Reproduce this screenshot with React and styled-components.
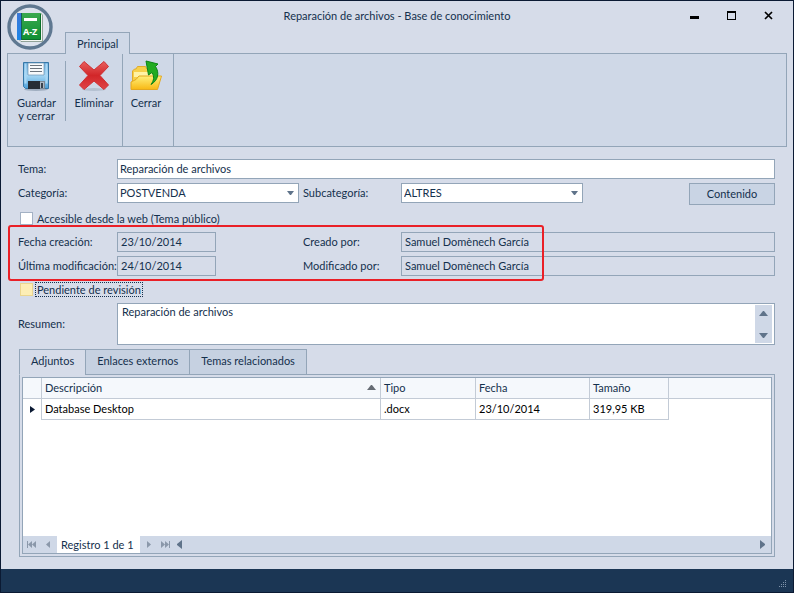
import { useState } from 'react';
import styled, { createGlobalStyle } from 'styled-components';

const GlobalStyle = createGlobalStyle`
    * {
        box-sizing: border-box;
    }
    body {
        margin: 0;
    }
    body, button, input, select, textarea {
        font-family: Lato, Roboto, sans-serif;
        font-size: 11px;
        line-height: 13px;
        color: #14304d;
    }
`;

const Window = styled.div`
    position: relative;
    display: flex;
    flex-direction: column;
    min-height: 100vh;
    border: 1px solid #0b1a33;
    background-color: #d6dce9;
`;

/* ---------- title bar ---------- */

const TitleBar = styled.header`
    display: grid;
    grid-template-columns: 1fr auto 1fr;
    align-items: center;
    height: 31px;
    padding: 0 13px 2px;
`;

const Title = styled.h1`
    grid-column: 2;
    margin: 0;
    font-size: 11px;
    font-weight: normal;
`;

const WindowButtons = styled.div`
    display: flex;
    justify-content: flex-end;
    gap: 13px;
`;

const WindowButton = styled.button`
    display: flex;
    align-items: center;
    justify-content: center;
    width: 24px;
    height: 24px;
    padding: 0;
    border: none;
    background: none;
`;

const AppLogo = styled.div`
    // sits over the title bar and the ribbon
    position: absolute;
    top: 3px;
    left: 6px;
    width: 46px;
    height: 46px;
    z-index: 1;

    svg {
        display: block;
    }
`;

/* ---------- ribbon ---------- */

const RibbonTabs = styled.div`
    display: flex;
    padding-left: 64px;
`;

const RibbonTab = styled.button`
    height: 22px;
    margin-bottom: -1px;
    padding: 0 11px;
    border: 1px solid #93a5b8;
    border-bottom: none;
    background-color: #cfd8e7;
    z-index: 1;
`;

const Ribbon = styled.div`
    display: flex;
    height: 94px;
    margin: 0 6px;
    border: 1px solid #93a5b8;
    background-color: #cfd8e7;
`;

const RibbonGroup = styled.div`
    display: flex;
    padding: 6px 0 0;
    border-right: 1px solid #93a5b8;

    &:last-child {
        padding-right: 4px;
    }
`;

const RibbonButton = styled.button`
    display: flex;
    flex-direction: column;
    align-items: center;
    gap: 4px;
    width: ${(props) => props.$width}px;
    height: 66px;
    padding: 0;
    border: none;
    background: none;
`;

const Separator = styled.div`
    width: 1px;
    height: 60px;
    margin-top: 1px;
    background-color: #93a5b8;
`;

/* ---------- form ---------- */

const Form = styled.form`
    display: flex;
    flex-direction: column;
    gap: 4px;
    padding: 12px 18px 0 17px;
`;

const Row = styled.div`
    display: grid;
    grid-template-columns: ${(props) => props.$columns || '99px 182px 102px 182px 1fr'};
    align-items: start;
`;

const Label = styled.label`
    padding-left: ${(props) => (props.$inner ? '4px' : '0')};
    line-height: 20px;
    white-space: nowrap;
`;

const Field = styled.input`
    width: ${(props) => props.$width || '100%'};
    height: 20px;
    padding: 0 2px 2px;
    border: 1px solid #93a5b8;
    border-radius: 0;
    background-color: #fff;
    outline: none;

    &:read-only {
        padding: 0 3px 2px;
        background-color: transparent;
    }
`;

const SelectBox = styled.div`
    position: relative;

    select {
        appearance: none;
        width: 100%;
        height: 20px;
        padding: 0 20px 2px 2px;
        border: 1px solid #93a5b8;
        border-radius: 0;
        background-color: #fff;
    }

    svg {
        position: absolute;
        top: 8px;
        right: 5px;
        pointer-events: none;
    }
`;

const ContentButton = styled.button`
    justify-self: end;
    width: 86px;
    height: 22px;
    padding: 0 0 2px;
    border: 1px solid #93a5b8;
    background-color: #c9d4e4;
`;

const CheckLabel = styled.label`
    display: flex;
    align-items: center;
    gap: 3px;
    height: 19px;
    padding-left: 2px;

    span {
        padding: 0 1px;
        outline: ${(props) => (props.$focused ? '1px dotted #14304d' : 'none')};
    }
`;

const CheckBox = styled.input`
    appearance: none;
    width: 13px;
    height: 13px;
    margin: 0;
    border: 1px solid ${(props) => (props.$focused ? '#ebd68f' : '#a3b1c4')};
    background-color: ${(props) => (props.$focused ? '#fdeeb5' : '#fff')};

    &:checked {
        box-shadow: inset 0 0 0 2px #fff;
        background-color: #14304d;
    }
`;

const AuditRows = styled.div`
    position: relative;
    display: flex;
    flex-direction: column;
    gap: 4px;
`;

const Highlight = styled.div`
    // red frame drawn over the audit fields
    position: absolute;
    top: -7px;
    bottom: -5px;
    left: -10px;
    width: 536px;
    border: 2px solid #ea2027;
    border-radius: 3px;
    pointer-events: none;
`;

const MemoLabel = styled(Label)`
    align-self: center;
`;

const Memo = styled.div`
    display: flex;
    height: 42px;
    padding: 1px 2px 1px 0;
    border: 1px solid #93a5b8;
    background-color: #fff;

    textarea {
        flex: 1;
        padding: 0 4px;
        border: none;
        background: none;
        resize: none;
        outline: none;
        overflow: hidden;
    }
`;

const Scroller = styled.div`
    display: flex;
    flex-direction: column;
    justify-content: space-between;
    width: 17px;
    background-color: #cfd8e7;
`;

const ScrollButton = styled.button`
    display: flex;
    align-items: center;
    justify-content: center;
    width: 17px;
    height: 16px;
    padding: 0;
    border: none;
    background: none;
`;

/* ---------- tabs and table ---------- */

const Details = styled.section`
    display: flex;
    flex: 1;
    flex-direction: column;
    padding: 4px 18px 12px;
`;

const Tabs = styled.div`
    display: flex;
    z-index: 1;
`;

const Tab = styled.button`
    height: 26px;
    margin-right: -1px;
    margin-bottom: -1px;
    padding: 0 11px 3px;
    border: 1px solid #93a5b8;
    border-bottom-color: ${(props) => (props.$active ? '#d6dce9' : '#93a5b8')};
    background-color: ${(props) => (props.$active ? '#d6dce9' : '#c6d1e1')};
`;

const TabPanel = styled.div`
    display: flex;
    flex: 1;
    padding: 2px;
    border: 1px solid #93a5b8;
`;

const Grid = styled.div`
    display: flex;
    flex: 1;
    flex-direction: column;
    justify-content: space-between;
    border: 1px solid #93a5b8;
    background-color: #fff;
`;

const Table = styled.table`
    width: 100%;
    table-layout: fixed;
    border-collapse: separate;
    border-spacing: 0;
    color: #14304d;

    th, td {
        height: 21px;
        padding: 0 4px 2px 3px;
        border-right: 1px solid #c3cbd6;
        border-bottom: 1px solid #c3cbd6;
        font-weight: normal;
        text-align: left;
    }

    th {
        background-color: #f5f8fc;
    }

    td {
        color: #000;
    }

    th:last-child, td:last-child {
        border-right: none;
    }

    td:first-child, td:last-child {
        padding-bottom: 0;
        border-bottom: none;
    }
`;

const SortHeader = styled.div`
    display: flex;
    align-items: center;
    justify-content: space-between;
`;

const RowMark = styled.svg`
    display: block;
    margin-left: 4px;
`;

const Navigator = styled.div`
    display: flex;
    align-items: stretch;
    height: 17px;
    background-color: #cfd8e7;
`;

const NavButton = styled.button`
    display: flex;
    align-items: center;
    justify-content: center;
    width: ${(props) => props.$width || 17}px;
    padding: 0;
    border: none;
    background: none;
`;

const Record = styled.span`
    padding: 0 6px 0 4px;
    background-color: #fff;
    line-height: 17px;
`;

const Spacer = styled.div`
    flex: 1;
`;

const StatusBar = styled.footer`
    display: flex;
    align-items: flex-end;
    justify-content: flex-end;
    height: 23px;
    padding: 4px 6px;
    background-color: #1b3654;
`;

/* ---------- icons ---------- */

function Arrow({ dir, color = '#5f738a' }) {
    const points = {
        up: '0,5 4,0 5,0 9,5',
        down: '0,0 9,0 5,5 4,5',
        left: '5,0 5,9 0,5 0,4',
        right: '0,0 0,9 5,5 5,4',
    };
    const wide = dir === 'up' || dir === 'down';
    return (
        <svg width={wide ? 9 : 5} height={wide ? 5 : 9}>
            <polygon points={points[dir]} fill={color} />
        </svg>
    );
}

function DropArrow() {
    return (
        <svg width="7" height="4">
            <polygon points="0,0 7,0 4,4 3,4" fill="#5f738a" />
        </svg>
    );
}

function NavIcon({ kind }) {
    const flip = kind === 'next' || kind === 'last';
    const many = kind === 'first' || kind === 'last';
    return (
        <svg width="9" height="7" viewBox="0 0 9 7" fill="#8b98aa">
            <g transform={flip ? 'translate(9 0) scale(-1 1)' : undefined}>
                {many ? (
                    <path d="M0 0h1v7H0zM5 0v7L1 3.5zM9 0v7L5 3.5z" />
                ) : (
                    <path d="M6 0v7L2 3.5z" />
                )}
            </g>
        </svg>
    );
}

function BookLogo() {
    return (
        <svg width="46" height="46" viewBox="0 0 46 46">
            <defs>
                <linearGradient id="cover" x1="0" y1="0" x2="0" y2="1">
                    <stop offset="0" stopColor="#3aa94f" />
                    <stop offset="1" stopColor="#0e8f33" />
                </linearGradient>
                <linearGradient id="spine" x1="0" y1="0" x2="0" y2="1">
                    <stop offset="0" stopColor="#3c78d8" />
                    <stop offset="1" stopColor="#1c86e8" />
                </linearGradient>
            </defs>
            <circle cx="23" cy="23" r="21" fill="#dce2ed" stroke="#5f7891" strokeWidth="3.4" />
            <path d="M12 35.500l2 2h21.500V11l-2-2z" fill="#f4f6f2" stroke="#55705c" strokeWidth=".6" />
            <rect x="10" y="9" width="24" height="27" rx="1" fill="url(#cover)" />
            <path d="M33.500 10v25.500H14" fill="none" stroke="#08702a" />
            <path d="M11 9h3v27h-3a1 1 0 0 1-1-1V10a1 1 0 0 1 1-1z" fill="url(#spine)" />
            <rect x="14" y="9" width="1" height="27" fill="#145f57" />
            <rect x="17" y="14" width="13" height="3" fill="#fff" />
            <text x="16" y="31" fontSize="9" fontWeight="bold" fontFamily="Noto Sans, sans-serif" fill="#fff">A-Z</text>
        </svg>
    );
}

function SaveIcon() {
    return (
        <svg width="32" height="32" viewBox="0 0 32 32">
            <defs>
                <linearGradient id="disk" x1="0" y1="0" x2="0" y2="1">
                    <stop offset="0" stopColor="#5c9fd2" />
                    <stop offset=".5" stopColor="#a4d6f4" />
                    <stop offset="1" stopColor="#4d9fd8" />
                </linearGradient>
            </defs>
            <ellipse cx="15" cy="29.500" rx="12" ry="1.500" fill="#9fadbf" />
            <path d="M2.500 2.500h25v26H4.500l-2-2z" fill="url(#disk)" stroke="#3778a8" />
            <path d="M3.500 3.500h2v20h-2zM24.500 3.500h2v20h-2z" fill="#a9d8f5" />
            <path d="M7 3h16v12H7z" fill="#f8fafc" stroke="#6d94b3" strokeWidth=".7" />
            <path d="M9 5.500h12M9 8.500h12M9 11.500h12" stroke="#6b737c" />
            <path d="M7 21h17v8H7z" fill="#7c8894" />
            <path d="M7 21h12v8H7z" fill="#272d35" />
            <path d="M19 22h4v6h-4z" fill="#aeb9c5" />
            <path d="M20 23h2v5h-2z" fill="#39424c" />
        </svg>
    );
}

function DeleteIcon() {
    return (
        <svg width="32" height="32" viewBox="0 0 32 32">
            <defs>
                <linearGradient id="cross" x1="0" y1="0" x2="0" y2="1">
                    <stop offset="0" stopColor="#e8605e" />
                    <stop offset=".5" stopColor="#d22629" />
                    <stop offset="1" stopColor="#df4547" />
                </linearGradient>
            </defs>
            <ellipse cx="16" cy="29.500" rx="12" ry="1.500" fill="#b4c0d0" />
            <path
                d="M6 1.500L16 10 26 1.500l4.500 5L22 15.500 30.500 25 26 29.500 16 21 6 29.500 1.500 25 10 15.500 1.500 6.500z"
                fill="url(#cross)"
                stroke="#cf3033"
                strokeLinejoin="round"
            />
        </svg>
    );
}

function CloseFolderIcon() {
    return (
        <svg width="32" height="32" viewBox="0 0 32 32">
            <defs>
                <linearGradient id="folder" x1="0" y1="0" x2="0" y2="1">
                    <stop offset="0" stopColor="#fff07a" />
                    <stop offset="1" stopColor="#f8b814" />
                </linearGradient>
            </defs>
            <path d="M2.500 28V11l2-2H6l1.500-2.500h8L17 9h8.500v19z" fill="#f7d04a" stroke="#e0ab2a" />
            <path d="M4 12h20v5H4z" fill="#fff3a5" />
            <path d="M1 29.500V22l5-2.500L9 16h22.500l-4 13.500z" fill="url(#folder)" stroke="#e3a820" strokeLinejoin="round" />
            <path
                d="M21 24.500c3-4 3.500-8 1-12l-3.500 2.500L16 1l12 3-2.500 2.500c4 6 3 13.500-4.500 18z"
                fill="#22ab22"
                stroke="#0b8417"
                strokeLinejoin="round"
            />
        </svg>
    );
}

const tabs = ['Adjuntos', 'Enlaces externos', 'Temas relacionados'];

const attachments = [
    { name: 'Database Desktop', type: '.docx', date: '23/10/2014', size: '319,95 KB' },
];

export default function App() {
    const [activeTab, setActiveTab] = useState(tabs[0]);

    return (
        <Window>
            <GlobalStyle />
            <AppLogo>
                <BookLogo />
            </AppLogo>
            <TitleBar>
                <Title>Reparación de archivos - Base de conocimiento</Title>
                <WindowButtons>
                    <WindowButton aria-label="Minimizar">
                        <svg width="9" height="9">
                            <rect y="5" width="9" height="3" fill="#000" />
                        </svg>
                    </WindowButton>
                    <WindowButton aria-label="Maximizar">
                        <svg width="9" height="9">
                            <path d="M0 0h9v9H0zM1 2v6h7V2z" fillRule="evenodd" fill="#000" />
                        </svg>
                    </WindowButton>
                    <WindowButton aria-label="Cerrar ventana">
                        <svg width="9" height="9">
                            <path d="M1 1l7 7M8 1L1 8" stroke="#000" strokeWidth="1.700" />
                        </svg>
                    </WindowButton>
                </WindowButtons>
            </TitleBar>

            <RibbonTabs>
                <RibbonTab>Principal</RibbonTab>
            </RibbonTabs>
            <Ribbon>
                <RibbonGroup>
                    <RibbonButton $width={57}>
                        <SaveIcon />
                        <span>Guardar<br />y cerrar</span>
                    </RibbonButton>
                    <Separator />
                    <RibbonButton $width={56}>
                        <DeleteIcon />
                        <span>Eliminar</span>
                    </RibbonButton>
                </RibbonGroup>
                <RibbonGroup>
                    <RibbonButton $width={46}>
                        <CloseFolderIcon />
                        <span>Cerrar</span>
                    </RibbonButton>
                </RibbonGroup>
            </Ribbon>

            <Form onSubmit={(e) => e.preventDefault()}>
                <Row $columns="99px 1fr">
                    <Label htmlFor="tema">Tema:</Label>
                    <Field id="tema" defaultValue="Reparación de archivos" />
                </Row>
                <Row>
                    <Label htmlFor="categoria">Categoría:</Label>
                    <SelectBox>
                        <select id="categoria">
                            <option>POSTVENDA</option>
                        </select>
                        <DropArrow />
                    </SelectBox>
                    <Label htmlFor="subcategoria" $inner>Subcategoría:</Label>
                    <SelectBox>
                        <select id="subcategoria">
                            <option>ALTRES</option>
                        </select>
                        <DropArrow />
                    </SelectBox>
                    <ContentButton type="button">Contenido</ContentButton>
                </Row>
                <CheckLabel>
                    <CheckBox type="checkbox" />
                    <span>Accesible desde la web (Tema público)</span>
                </CheckLabel>
                <AuditRows>
                    <Row $columns="99px 182px 102px 1fr">
                        <Label htmlFor="creacion">Fecha creación:</Label>
                        <Field id="creacion" $width="99px" readOnly value="23/10/2014" />
                        <Label htmlFor="creado" $inner>Creado por:</Label>
                        <Field id="creado" readOnly value="Samuel Domènech García" />
                    </Row>
                    <Row $columns="99px 182px 102px 1fr">
                        <Label htmlFor="modificacion">Última modificación:</Label>
                        <Field id="modificacion" $width="99px" readOnly value="24/10/2014" />
                        <Label htmlFor="modificado" $inner>Modificado por:</Label>
                        <Field id="modificado" readOnly value="Samuel Domènech García" />
                    </Row>
                    <Highlight />
                </AuditRows>
                <CheckLabel $focused>
                    <CheckBox type="checkbox" $focused />
                    <span>Pendiente de revisión</span>
                </CheckLabel>
                <Row $columns="99px 1fr">
                    <MemoLabel htmlFor="resumen">Resumen:</MemoLabel>
                    <Memo>
                        <textarea id="resumen" defaultValue="Reparación de archivos" />
                        <Scroller>
                            <ScrollButton type="button" aria-label="Subir">
                                <Arrow dir="up" />
                            </ScrollButton>
                            <ScrollButton type="button" aria-label="Bajar">
                                <Arrow dir="down" />
                            </ScrollButton>
                        </Scroller>
                    </Memo>
                </Row>
            </Form>

            <Details>
                <Tabs role="tablist">
                    {tabs.map((tab) => (
                        <Tab
                            key={tab}
                            role="tab"
                            aria-selected={tab === activeTab}
                            $active={tab === activeTab}
                            onClick={() => setActiveTab(tab)}
                        >
                            {tab}
                        </Tab>
                    ))}
                </Tabs>
                <TabPanel role="tabpanel">
                    <Grid>
                        <Table>
                            <colgroup>
                                <col width="19" />
                                <col />
                                <col width="95" />
                                <col width="114" />
                                <col width="79" />
                                <col width="102" />
                            </colgroup>
                            <thead>
                                <tr>
                                    <th />
                                    <th>
                                        <SortHeader>
                                            Descripción
                                            <Arrow dir="up" color="#666c74" />
                                        </SortHeader>
                                    </th>
                                    <th>Tipo</th>
                                    <th>Fecha</th>
                                    <th>Tamaño</th>
                                    <th />
                                </tr>
                            </thead>
                            <tbody>
                                {attachments.map((file) => (
                                    <tr key={file.name}>
                                        <td>
                                            <RowMark width="5" height="7">
                                                <path d="M0 0l5 3.500L0 7z" fill="#0b1a33" />
                                            </RowMark>
                                        </td>
                                        <td>{file.name}</td>
                                        <td>{file.type}</td>
                                        <td>{file.date}</td>
                                        <td>{file.size}</td>
                                        <td />
                                    </tr>
                                ))}
                            </tbody>
                        </Table>
                        <Navigator>
                            <NavButton aria-label="Primero"><NavIcon kind="first" /></NavButton>
                            <NavButton aria-label="Anterior"><NavIcon kind="prev" /></NavButton>
                            <Record>Registro 1 de 1</Record>
                            <NavButton aria-label="Siguiente"><NavIcon kind="next" /></NavButton>
                            <NavButton aria-label="Último"><NavIcon kind="last" /></NavButton>
                            <NavButton $width={12} aria-label="Izquierda"><Arrow dir="left" /></NavButton>
                            <Spacer />
                            <NavButton aria-label="Derecha"><Arrow dir="right" /></NavButton>
                        </Navigator>
                    </Grid>
                </TabPanel>
            </Details>

            <StatusBar>
                <svg width="8" height="8" fill="#7f93aa">
                    <path d="M6 0h1v1H6zM4 2h1v1H4zM6 2h1v1H6zM2 4h1v1H2zM4 4h1v1H4zM6 4h1v1H6zM0 6h1v1H0zM2 6h1v1H2zM4 6h1v1H4zM6 6h1v1H6z" />
                </svg>
            </StatusBar>
        </Window>
    );
}
